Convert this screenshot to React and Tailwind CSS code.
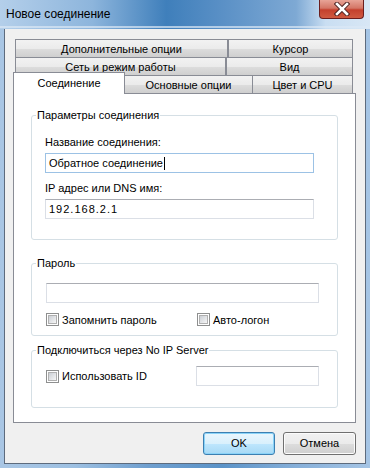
import React from "react";

const font = { fontFamily: '"Liberation Sans", Arial, sans-serif' };

function Tab({ w, children, className = "" }) {
  return (
    <div
      className={`h-[18px] ${w} flex items-center justify-center border border-[#898c95] border-b-0 bg-[linear-gradient(#f2f2f2_0%,#ebebeb_50%,#dddddd_51%,#cfcfcf_100%)] text-[11px] leading-[14px] text-black ${className}`}
    >
      {children}
    </div>
  );
}

function GroupBox({ label, h, className = "", children }) {
  return (
    <div
      className={`relative ${h} w-[307px] rounded-[3px] border border-[#d5dfe5] ${className}`}
    >
      <span className="absolute left-[4px] top-[-8px] bg-white px-[1px] text-[11px] leading-[14px] text-black">
        {label}
      </span>
      {children}
    </div>
  );
}

function Checkbox() {
  return (
    <div className="h-[13px] w-[13px] shrink-0 border border-[#8e8f8f] bg-white p-[1px]">
      <div className="h-full w-full border border-[#b0b0b0] bg-[linear-gradient(135deg,#cbcfd5_0%,#f6f6f6_100%)]" />
    </div>
  );
}

export default function App() {
  return (
    <div
      className="flex h-[468px] w-[370px] flex-col overflow-hidden bg-[linear-gradient(90deg,#a9c6e4_0%,#9dc0e2_20%,#6f9fcf_40%,#5b93c8_60%,#86afd9_80%,#a6c5e5_100%)]"
      style={font}
    >
      {/* Title bar */}
      <div className="relative flex h-[29px] shrink-0 items-start bg-[linear-gradient(90deg,#b4cfea_0%,#8db5dc_25%,#3f7fbb_45%,#5a90c6_60%,#7ea9d4_80%,#c9def2_88%,#d8e7f5_100%)]">
        <span className="ml-[6px] mt-[7px] text-[12px] leading-[15px] text-black">
          Новое соединение
        </span>
        <div className="absolute left-[319px] top-0 flex h-[19px] w-[45px] items-center justify-center rounded-b-[4px] border border-t-0 border-[#6b1e1e] bg-[linear-gradient(#e8a497_0%,#d47666_45%,#c4402d_55%,#cf5a41_100%)]">
          <svg width="16" height="14" viewBox="0 0 16 14">
            <path d="M3 2 L13 12 M13 2 L3 12" stroke="#4a2020" strokeWidth="4.5" strokeLinecap="square" />
            <path d="M3 2 L13 12 M13 2 L3 12" stroke="#ffffff" strokeWidth="2.6" strokeLinecap="square" />
          </svg>
        </div>
        <div className="absolute bottom-[1px] left-0 h-[2px] w-full bg-[#dbe8f5] opacity-70" />
      </div>

      {/* Client area */}
      <div className="ml-[4px] mr-[4px] mb-[4px] flex flex-1 flex-col border border-t-0 border-[#5d6b7d] bg-[#f0f0f0] pl-[8px] pt-[10px]">
        {/* Tabs */}
        <div className="flex w-[343px] flex-col">
          <div className="ml-[2px] flex">
            <Tab w="w-[213px]">Дополнительные опции</Tab>
            <Tab w="w-[125px]">Курсор</Tab>
          </div>
          <div className="ml-[2px] flex">
            <Tab w="w-[211px]">Сеть и режим работы</Tab>
            <Tab w="w-[127px]">Вид</Tab>
          </div>
          <div className="flex h-[18px] items-end">
            <div className="relative z-10 -mb-px flex h-[22px] w-[112px] items-start justify-center border border-b-0 border-[#898c95] bg-white pt-[3px] text-[11px] leading-[14px] text-black">
              Соединение
            </div>
            <Tab w="w-[128px]" className="border-l-0">Основные опции</Tab>
            <Tab w="w-[100px]" className="border-l-0">Цвет и CPU</Tab>
          </div>

          {/* Panel */}
          <div className="flex h-[330px] w-[343px] flex-col border border-[#898c95] bg-white pl-[17px] pt-[21px]">
            <GroupBox label="Параметры соединения" h="h-[125px]">
              <div className="flex flex-col pl-[13px] pt-[19px]">
                <span className="text-[11px] leading-[14px] text-black">Название соединения:</span>
                <div className="mt-[4px] flex h-[20px] w-[269px] items-center border border-[#9cc2e5] pl-[3px] text-[11px] text-black">
                  Обратное соединение
                  <span className="ml-[1px] inline-block h-[13px] w-px bg-black" />
                </div>
                <span className="mt-[8px] text-[11px] leading-[14px] text-black">IP адрес или DNS имя:</span>
                <div className="mt-[4px] flex h-[20px] w-[269px] items-center border border-[#dbdfe6] border-t-[#abadb3] pl-[3px] text-[11px] tracking-[1px] text-black">
                  192.168.2.1
                </div>
              </div>
            </GroupBox>

            <GroupBox label="Пароль" h="h-[73px]" className="mt-[23px]">
              <div className="flex flex-col pl-[14px] pt-[19px]">
                <div className="h-[20px] w-[273px] border border-[#dbdfe6] border-t-[#abadb3]" />
                <div className="mt-[10px] flex h-[13px] items-center">
                  <Checkbox />
                  <span className="ml-[3px] w-[135px] text-[11px] leading-[14px] text-black">Запомнить пароль</span>
                  <Checkbox />
                  <span className="ml-[3px] text-[11px] leading-[14px] text-black">Авто-логон</span>
                </div>
              </div>
            </GroupBox>

            <GroupBox label="Подключиться через No IP Server" h="h-[58px]" className="mt-[14px]">
              <div className="mt-[15px] flex h-[20px] items-center pl-[14px]">
                <Checkbox />
                <span className="ml-[3px] w-[134px] text-[11px] leading-[14px] text-black">Использовать ID</span>
                <div className="h-[20px] w-[123px] border border-[#dbdfe6] border-t-[#abadb3]" />
              </div>
            </GroupBox>
          </div>

          {/* Buttons */}
          <div className="mt-[9px] flex justify-end gap-[8px]">
            <div className="flex h-[23px] w-[72px] items-center justify-center rounded-[3px] border border-[#3c7fb1] bg-[linear-gradient(#eaf6fd_0%,#d9f0fc_50%,#bee6fd_51%,#a7d9f5_100%)] text-[11px] text-black shadow-[inset_0_0_0_1px_#8ad3f8]">
              OK
            </div>
            <div className="flex h-[23px] w-[73px] items-center justify-center rounded-[3px] border border-[#707070] bg-[linear-gradient(#f2f2f2_0%,#ebebeb_50%,#dddddd_51%,#cfcfcf_100%)] text-[11px] text-black shadow-[inset_0_0_0_1px_#fcfcfc]">
              Отмена
            </div>
          </div>
        </div>
      </div>
    </div>
  );
}
